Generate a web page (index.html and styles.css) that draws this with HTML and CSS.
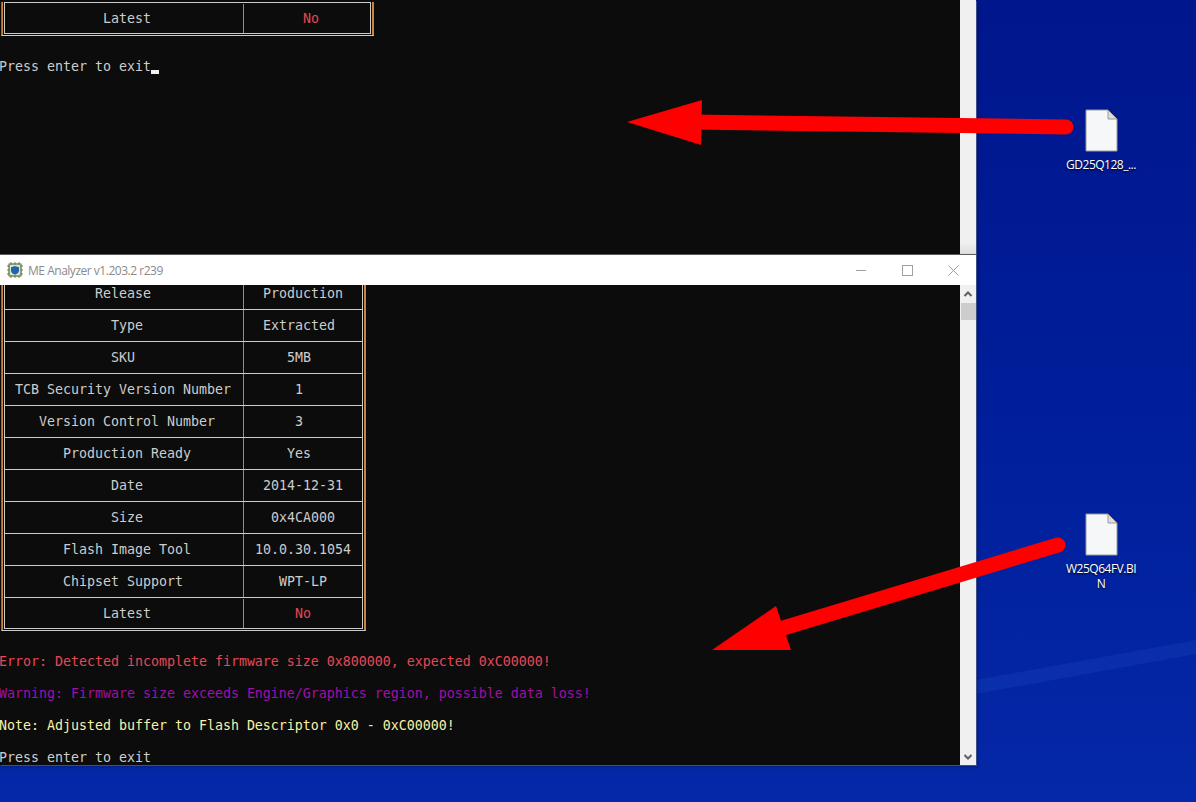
FILE: index.html
```html
<!DOCTYPE html>
<html lang="en">
<head>
    <meta charset="UTF-8">
    <meta name="viewport" content="width=device-width, initial-scale=1.0">
    <title>ME Analyzer</title>
    <link rel="stylesheet" href="styles.css">
</head>
<body>
    <div class="desktop">
        <svg class="wallpaper" viewBox="0 0 1196 802" aria-hidden="true">
            <path d="M976 680 L1196 640 V654 L976 694 Z" fill="#2a5cc8" opacity="0.18"/>
        </svg>

        <!-- window behind -->
        <div class="window window-back">
            <div class="console">
                <div class="table table-back">
                    <div class="row row-top">
                        <div class="cell cell-name">Latest</div>
                        <div class="cell cell-value cell-wide red">No</div>
                    </div>
                </div>
                <p class="line line-first">Press enter to exit<span class="cursor"></span></p>
            </div>
            <div class="scroll-strip"></div>
        </div>

        <!-- window in front -->
        <div class="window window-front">
            <div class="titlebar">
                <svg class="app-icon" viewBox="0 0 16 16" aria-hidden="true">
                    <rect x="1" y="1" width="14" height="14" rx="2" fill="#8fa678"/>
                    <path d="M0 4H16M0 8H16M0 12H16M4 0V16M8 0V16M12 0V16" stroke="#6d7d5e" stroke-width="1"/>
                    <rect x="3" y="3" width="10" height="10" fill="#dfe3d6"/>
                    <path d="M8 4 L12 5.2 V8.5 C12 10.6 10 12 8 12.8 C6 12 4 10.6 4 8.5 V5.2 Z" fill="#1f66a8"/>
                </svg>
                <span class="title">ME Analyzer v1.203.2 r239</span>
                <div class="controls">
                    <span class="control"><svg viewBox="0 0 11 11"><path d="M0 5.5H10" stroke="#a0a0a0" fill="none"/></svg></span>
                    <span class="control"><svg viewBox="0 0 11 11"><rect x="0.5" y="0.5" width="10" height="10" stroke="#a0a0a0" fill="none"/></svg></span>
                    <span class="control"><svg viewBox="0 0 11 11"><path d="M0.5 0.5L10.5 10.5M10.5 0.5L0.5 10.5" stroke="#a0a0a0" fill="none"/></svg></span>
                </div>
            </div>
            <div class="window-body">
                <div class="console">
                    <div class="table table-front">
                        <div class="row"><div class="cell cell-name odd">Release</div><div class="cell cell-value">Production</div></div>
                        <div class="row"><div class="cell cell-name">Type</div><div class="cell cell-value odd">Extracted</div></div>
                        <div class="row"><div class="cell cell-name odd">SKU</div><div class="cell cell-value odd">5MB</div></div>
                        <div class="row"><div class="cell cell-name odd">TCB Security Version Number</div><div class="cell cell-value odd">1</div></div>
                        <div class="row"><div class="cell cell-name">Version Control Number</div><div class="cell cell-value odd">3</div></div>
                        <div class="row"><div class="cell cell-name">Production Ready</div><div class="cell cell-value odd">Yes</div></div>
                        <div class="row"><div class="cell cell-name">Date</div><div class="cell cell-value">2014-12-31</div></div>
                        <div class="row"><div class="cell cell-name">Size</div><div class="cell cell-value">0x4CA000</div></div>
                        <div class="row"><div class="cell cell-name">Flash Image Tool</div><div class="cell cell-value">10.0.30.1054</div></div>
                        <div class="row"><div class="cell cell-name odd">Chipset Support</div><div class="cell cell-value">WPT-LP</div></div>
                        <div class="row row-last"><div class="cell cell-name">Latest</div><div class="cell cell-value red">No</div></div>
                    </div>
                    <p class="line line-first red">Error: Detected incomplete firmware size 0x800000, expected 0xC00000!</p>
                    <p class="line purple">Warning: Firmware size exceeds Engine/Graphics region, possible data loss!</p>
                    <p class="line yellow">Note: Adjusted buffer to Flash Descriptor 0x0 - 0xC00000!</p>
                    <p class="line">Press enter to exit</p>
                </div>
                <div class="scrollbar">
                    <svg class="arrow" viewBox="0 0 8 6"><path d="M0.5 5L4 1.5L7.5 5" stroke="#606060" stroke-width="2" fill="none"/></svg>
                    <div class="thumb"></div>
                    <svg class="arrow arrow-down" viewBox="0 0 8 6"><path d="M0.5 1L4 4.5L7.5 1" stroke="#606060" stroke-width="2" fill="none"/></svg>
                </div>
            </div>
        </div>

        <!-- desktop icons -->
        <div class="file file-one">
            <svg class="file-icon" viewBox="0 0 33 43" aria-hidden="true">
                <path d="M1 1H23L32 10V42H1Z" fill="#f6f7f9" stroke="#9a9a9a"/>
                <path d="M23 1V10H32Z" fill="#dcdcdc" stroke="#9a9a9a"/>
            </svg>
            <span class="file-name">GD25Q128_...</span>
        </div>
        <div class="file file-two">
            <svg class="file-icon" viewBox="0 0 33 43" aria-hidden="true">
                <path d="M1 1H23L32 10V42H1Z" fill="#f6f7f9" stroke="#9a9a9a"/>
                <path d="M23 1V10H32Z" fill="#dcdcdc" stroke="#9a9a9a"/>
            </svg>
            <span class="file-name">W25Q64FV.BI<br>N</span>
        </div>

        <!-- red arrows drawn over the screenshot -->
        <svg class="annotations" viewBox="0 0 1196 802" aria-hidden="true">
            <path d="M1066 127 L690 122" stroke="#fe0000" stroke-width="15" stroke-linecap="round" fill="none"/>
            <path d="M627 122 L702 100 L701 145 Z" fill="#fe0000"/>
            <path d="M1058 545 L770 632" stroke="#fe0000" stroke-width="15" stroke-linecap="round" fill="none"/>
            <path d="M712 650 L776 606 L791 650 Z" fill="#fe0000"/>
        </svg>
    </div>
</body>
</html>
```

FILE: styles.css
```css
* {
    box-sizing: border-box;
}

html, body {
    margin: 0;
    padding: 0;
}

.desktop {
    position: relative;
    width: 1196px;
    height: 802px;
    overflow: hidden;
    background: linear-gradient(180deg, #00168c 0%, #001f9c 55%, #0528a8 100%);
    font-family: "DejaVu Sans Mono", "Liberation Mono", monospace;
}

.wallpaper,
.annotations {
    position: absolute;
    left: 0;
    top: 0;
    width: 1196px;
    height: 802px;
}

.window {
    position: absolute;
    left: 0;
    width: 976px;
    display: flex;
    box-shadow: 1px 1px 0 #3c4f8a, 2px 2px 3px rgba(0, 0, 0, 0.25);
}

.window-back {
    top: 0;
    height: 255px;
}

.window-front {
    top: 254px;
    height: 511px;
    flex-direction: column;
    border-top: 1px solid #5a5a5a;
}

.scroll-strip {
    width: 16px;
    background: linear-gradient(180deg, #f0f0f0 95%, #dcdcdc 100%);
}

.titlebar {
    height: 30px;
    background: #fff;
    display: flex;
    align-items: center;
    padding-left: 7px;
    flex-shrink: 0;
}

.app-icon {
    width: 16px;
    height: 16px;
}

.title {
    margin-left: 5px;
    font: 12px "Open Sans", "Liberation Sans", sans-serif;
    letter-spacing: -0.48px;
    color: #8a8a8a;
}

.controls {
    margin-left: auto;
    display: flex;
}

.control {
    width: 46px;
    height: 30px;
    display: flex;
    align-items: center;
    justify-content: center;
}

.control svg {
    width: 11px;
    height: 11px;
}

.window-body {
    flex: 1;
    display: flex;
    min-height: 0;
}

.console {
    flex: 1;
    background: #0c0c0c;
    color: #cccccc;
    font-size: 13.29px;
    line-height: 16px;
    overflow: hidden;
    min-height: 0;
}

/* double line frame of the text table */
.table {
    width: 365px;
    margin-left: 1px;
    border-left: 1px solid #3f7fb5;
    border-right: 1px solid #b08a5a;
    border-bottom: 1px solid #cccccc;
    padding: 0 2px 1px;
    box-shadow: inset 1px 0 #c9853a, inset -1px 0 #c9853a;
}

.table-back {
    width: 373px;
    margin-top: 2px;
}

.table-front {
    margin-top: -7px;
}

.row {
    display: flex;
    height: 32px;
    border-bottom: 1px solid #cccccc;
    border-left: 1px solid #cccccc;
    border-right: 1px solid #cccccc;
}

.row-top {
    border-top: 1px solid #cccccc;
    padding-top: 1px;
}

.row-last {
    height: 31px;
    padding-top: 1px;
}

.cell {
    display: flex;
    align-items: center;
    justify-content: center;
}

.cell-name {
    width: 239px;
    padding-left: 6px;
    border-right: 1px solid #5a9bd5;
}

.cell-value {
    flex: 1;
}

.cell-wide {
    padding-left: 8px;
}

/* odd length texts sit half a character to the left */
.odd {
    padding-right: 8px;
}

.line {
    margin: 16px 0 0 -1px;
    height: 16px;
    white-space: pre;
}

.line-first {
    margin-top: 23px;
}

.cursor {
    display: inline-block;
    width: 8px;
    height: 4px;
    background: #f2f2f2;
    vertical-align: -3px;
}

.red {
    color: #e74856;
}

.purple {
    color: #a010a8;
}

.yellow {
    color: #f9f1a5;
}

.scrollbar {
    width: 16px;
    background: #f0f0f0;
    display: flex;
    flex-direction: column;
    align-items: center;
}

.arrow {
    width: 8px;
    height: 6px;
    margin-top: 6px;
    flex-shrink: 0;
}

.thumb {
    width: 15px;
    height: 17px;
    margin-top: 6px;
    background: #cdcdcd;
}

.arrow-down {
    margin-top: auto;
    margin-bottom: 5px;
}

.file {
    position: absolute;
    width: 74px;
    display: flex;
    flex-direction: column;
    align-items: center;
    color: #fff;
    font: 12px/15px "Open Sans", "Liberation Sans", sans-serif;
    letter-spacing: -0.5px;
    text-align: center;
    text-shadow: 0 1px 2px #000;
}

.file-one {
    left: 1064px;
    top: 109px;
}

.file-two {
    left: 1064px;
    top: 513px;
}

.file-icon {
    width: 33px;
    height: 43px;
    margin-bottom: 5px;
}
```
